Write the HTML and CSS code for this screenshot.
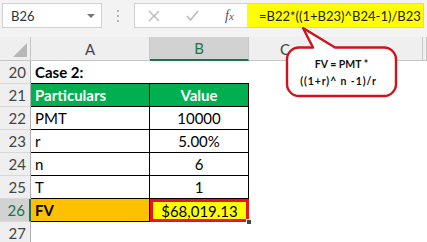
FILE: index.html
```html
<!DOCTYPE html>
<html lang="en">
<head>
  <meta charset="UTF-8" />
  <title>FV formula - Case 2</title>
  <link rel="stylesheet" href="styles.css">
</head>
<body>

  <div class="toolbar">
    <div class="namebox">
      <span>B26</span>
      <span class="caret"></span>
    </div>
    <div class="grip"><i></i><i></i><i></i></div>
    <div class="fbar">
      <div class="ficons">
        <svg width="12" height="12" viewBox="0 0 12 12"><path d="M1 1 L11 11 M11 1 L1 11" stroke="#b9b9b9" stroke-width="1.3" fill="none"/></svg>
        <svg width="13" height="11" viewBox="0 0 13 11"><path d="M1 6 L4.5 10 L12 1" stroke="#b9b9b9" stroke-width="1.5" fill="none"/></svg>
        <span class="fx">f<span>x</span></span>
      </div>
      <div class="formula">=B22*((1+B23)^B24-1)/B23</div>
    </div>
  </div>

  <div class="sheet">
    <div class="row hdr">
      <div class="corner"><div class="tri"></div></div>
      <div class="ch">A</div>
      <div class="ch sel">B</div>
      <div class="ch open">C</div>
      <div class="ch"></div>
      <div class="ch"></div>
    </div>
    <div class="row">
      <div class="rh">20</div>
      <div class="c bold top">Case 2:</div>
      <div class="c top"></div>
      <div class="c"></div><div class="c"></div><div class="c"></div>
    </div>
    <div class="row">
      <div class="rh">21</div>
      <div class="c box green bold">Particulars</div>
      <div class="c box green bold mid">Value</div>
      <div class="c"></div><div class="c"></div><div class="c"></div>
    </div>
    <div class="row">
      <div class="rh">22</div>
      <div class="c box">PMT</div>
      <div class="c box mid">10000</div>
      <div class="c"></div><div class="c"></div><div class="c"></div>
    </div>
    <div class="row">
      <div class="rh">23</div>
      <div class="c box">r</div>
      <div class="c box mid">5.00%</div>
      <div class="c"></div><div class="c"></div><div class="c"></div>
    </div>
    <div class="row">
      <div class="rh">24</div>
      <div class="c box">n</div>
      <div class="c box mid">6</div>
      <div class="c"></div><div class="c"></div><div class="c"></div>
    </div>
    <div class="row">
      <div class="rh">25</div>
      <div class="c box">T</div>
      <div class="c box mid">1</div>
      <div class="c"></div><div class="c"></div><div class="c"></div>
    </div>
    <div class="row">
      <div class="rh sel">26</div>
      <div class="c box orange bold">FV</div>
      <div class="c mid result">$68,019.13<span class="handle"></span></div>
      <div class="c"></div><div class="c"></div><div class="c"></div>
    </div>
    <div class="row">
      <div class="rh">27</div>
      <div class="c"></div><div class="c"></div>
      <div class="c"></div><div class="c"></div><div class="c"></div>
    </div>
  </div>

  <div class="callout">
    <svg width="118" height="76" viewBox="0 0 118 76">
      <path d="M31 23.5 L21 4 L53 23.5 H102 A12 12 0 0 1 114 35.5 V60 A12 12 0 0 1 102 72 H17 A12 12 0 0 1 5 60 V35.5 A12 12 0 0 1 17 23.5 Z"
            fill="#fff" stroke="#cc141c" stroke-width="2.4" stroke-linejoin="round"/>
    </svg>
    <div class="callout-text">
      <div>FV = PMT *</div>
      <div class="wide">((1+r)^ n -1)/r</div>
    </div>
  </div>

</body>
</html>
```

FILE: styles.css
```css
* {
  box-sizing: border-box;
  font-family: 'Lato', 'Liberation Sans', sans-serif;
}

body {
  margin: 0;
  width: 427px;
  height: 242px;
  overflow: hidden;
  position: relative;
  background: #fff;
}

/* formula bar */

.toolbar {
  height: 37px;
  background: #f3f3f3;
  display: flex;
  align-items: flex-start;
  padding: 3px 0 0 2px;
}

.namebox {
  width: 100px;
  height: 25px;
  background: #fff;
  border: 1px solid #d0d0d0;
  display: flex;
  align-items: center;
  justify-content: space-between;
  padding: 0 6px 0 8px;
  font-size: 13px;
  color: #333;
}

.caret {
  width: 0;
  height: 0;
  border-left: 4px solid transparent;
  border-right: 4px solid transparent;
  border-top: 4px solid #777;
}

.grip {
  width: 32px;
  height: 25px;
  display: flex;
  flex-direction: column;
  align-items: center;
  justify-content: center;
  gap: 3px;
}

.grip i {
  width: 2px;
  height: 2px;
  background: #b5b5b5;
}

.fbar {
  width: 290px;
  height: 25px;
  background: #fff;
  border: 1px solid #d0d0d0;
  display: flex;
}

.ficons {
  width: 112px;
  display: flex;
  align-items: center;
  padding-left: 13px;
  gap: 26px;
}

.fx {
  font-family: 'Liberation Serif', serif;
  font-style: italic;
  font-size: 14px;
  color: #555;
}

.fx span {
  font-family: 'Liberation Serif', serif;
  font-size: 11px;
}

.formula {
  flex: 1;
  background: #ffff00;
  display: flex;
  align-items: center;
  padding-left: 12px;
  font-size: 13px;
  color: #222;
  white-space: nowrap;
}

/* grid */

.row {
  display: grid;
  grid-template-columns: 31px 119px 99px 73px 101px 1fr;
  height: 23px;
}

.row > div {
  display: flex;
  align-items: center;
  white-space: nowrap;
  overflow: hidden;
  font-size: 15px;
  color: #000;
}

.row.hdr {
  height: 24px;
}

.corner {
  background: #efefef;
  border-right: 1px solid #c6c6c6;
  border-bottom: 1px solid #c6c6c6;
  justify-content: flex-end;
  align-items: flex-end !important;
  padding: 0 3px 3px 0;
}

.tri {
  width: 14px;
  height: 14px;
  background: #b7b7b7;
  clip-path: polygon(100% 0, 100% 100%, 0 100%);
}

.ch {
  background: #efefef;
  border-right: 1px solid #c6c6c6;
  border-bottom: 1px solid #c6c6c6;
  justify-content: center;
  color: #444 !important;
}

.ch.open {
  border-right-color: #efefef;
}

.ch.sel {
  background: #d2d2d2;
  border-bottom: 2px solid #217346;
  color: #217346 !important;
}

.rh {
  background: #efefef;
  border-right: 1px solid #b0b0b0;
  border-bottom: 1px solid #d8d8d8;
  justify-content: flex-end;
  padding-right: 4px;
  color: #444 !important;
}

.rh.sel {
  background: #d2d2d2;
  color: #217346 !important;
  border-right: 2px solid #217346;
}

.c {
  padding: 0 4px;
}

.bold {
  font-weight: bold;
}

.mid {
  justify-content: center;
}

.top {
  border-bottom: 1px solid #000;
}

.box {
  border-right: 1px solid #000;
  border-bottom: 1px solid #000;
}

.green {
  background: #00b050;
  color: #fff !important;
}

.orange {
  background: #ffc000;
}

.result {
  position: relative;
  overflow: visible !important;
  background: #ffff00;
  box-shadow: inset 0 0 0 3px #e8141b;
  padding: 0;
}

.handle {
  position: absolute;
  right: -3px;
  bottom: -3px;
  width: 6px;
  height: 6px;
  background: #3c4a40;
  border: 1px solid #fff;
}

/* callout bubble */

.callout {
  position: absolute;
  left: 282px;
  top: 24px;
  width: 118px;
  height: 76px;
}

.callout svg {
  position: absolute;
  left: 0;
  top: 0;
}

.callout-text {
  position: absolute;
  left: 5px;
  right: 4px;
  top: 25px;
  bottom: 4px;
  display: flex;
  flex-direction: column;
  align-items: center;
  justify-content: center;
  font-size: 10.5px;
  font-weight: bold;
  line-height: 17px;
  color: #111;
}

.callout-text .wide {
  letter-spacing: 0.9px;
  margin-left: -6px;
}
```
